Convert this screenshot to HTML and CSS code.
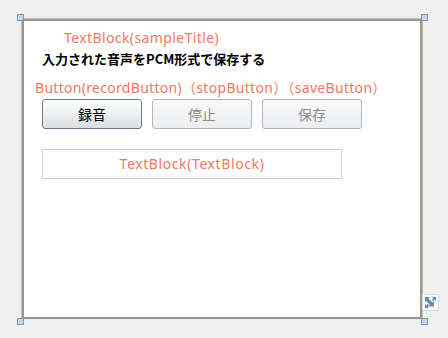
FILE: index.html
```html
<!DOCTYPE html>
<html lang="ja">
<head>
  <meta charset="UTF-8">
  <title>Designer</title>
  <link rel="stylesheet" href="styles.css">
</head>
<body>
  <div class="stage">
    <div class="frame">
      <div class="page">
        <div class="hint title-hint">TextBlock(sampleTitle)</div>
        <div class="sample-title">入力された音声をPCM形式で保存する</div>
        <div class="hint button-hint">Button(recordButton)（stopButton）（saveButton）</div>
        <div class="buttons">
          <button class="btn active">録音</button>
          <button class="btn" disabled>停止</button>
          <button class="btn" disabled>保存</button>
        </div>
        <div class="output">TextBlock(TextBlock)</div>
      </div>
    </div>

    <span class="handle tl"></span>
    <span class="handle tr"></span>
    <span class="handle bl"></span>
    <span class="handle br"></span>

    <div class="fit">
      <svg width="13" height="13" viewBox="0 0 13 13">
        <g fill="#6d8cab">
          <path d="M1 1h5l-1.5 1.5 4 4 1.5-1.5v5.5H4.5l1.5-1.5-4-4L1 6.5z"/>
          <path d="M12 1v4l-1.3-1.3-1.4 1.4-1.4-1.4 1.4-1.4L8 1z"/>
          <path d="M1 12V8l1.3 1.3 1.4-1.4 1.4 1.4-1.4 1.4L5 12z"/>
        </g>
      </svg>
    </div>
  </div>
</body>
</html>
```

FILE: styles.css
```css
body {
  margin: 0;
  background: #f0f0f0;
  font-family: "Noto Sans", "Noto Sans CJK JP", sans-serif;
}

.stage {
  position: relative;
  width: 448px;
  height: 338px;
}

.frame {
  position: absolute;
  left: 21px;
  top: 18px;
  border: 1px solid #b3c1cf;
  border-bottom: none;
}

.page {
  width: 396px;
  height: 296px;
  background: #fff;
  border: 2px solid #a39583;
  position: relative;
}

.hint {
  color: #f4775f;
  font-size: 14px;
  line-height: 19px;
  letter-spacing: 0.4px;
  white-space: nowrap;
}

.title-hint {
  margin: 7px 0 0 40px;
}

.sample-title {
  margin: 2px 0 0 18px;
  font-family: "Noto Sans CJK JP", sans-serif;
  font-weight: bold;
  font-size: 13px;
  line-height: 19px;
  color: #000;
}

.button-hint {
  margin: 10px 0 0 11px;
  letter-spacing: 0.3px;
}

.buttons {
  display: flex;
  gap: 10px;
  margin: 2px 0 0 18px;
}

.btn {
  width: 100px;
  height: 30px;
  border: 1px solid #adb7c2;
  border-radius: 3px;
  background: linear-gradient(#f8f8f8, #eceef0);
  font-family: "Noto Sans CJK JP", sans-serif;
  font-size: 14px;
  color: #8c8c8c;
  padding: 0;
}

.btn.active {
  border-color: #6f7b86;
  background: linear-gradient(#fdfdfd 0%, #eef0f2 50%, #d9dde1 100%);
  color: #000;
}

.output {
  width: 298px;
  height: 28px;
  margin: 20px 0 0 18px;
  border: 1px solid #c6d0da;
  color: #f4775f;
  font-size: 14px;
  line-height: 28px;
  letter-spacing: 0.6px;
  text-align: center;
}

.handle {
  position: absolute;
  width: 5px;
  height: 5px;
  background: #c9d7e4;
  border: 1px solid #7e95ac;
}

.handle.tl { left: 17px; top: 14px; }
.handle.tr { left: 421px; top: 14px; }
.handle.bl { left: 17px; top: 318px; }
.handle.br { left: 421px; top: 318px; }

.fit {
  position: absolute;
  left: 422px;
  top: 294px;
  width: 15px;
  height: 15px;
  background: #f7f9fb;
  border: 1px solid #d3dde7;
  display: flex;
  align-items: center;
  justify-content: center;
}
```
